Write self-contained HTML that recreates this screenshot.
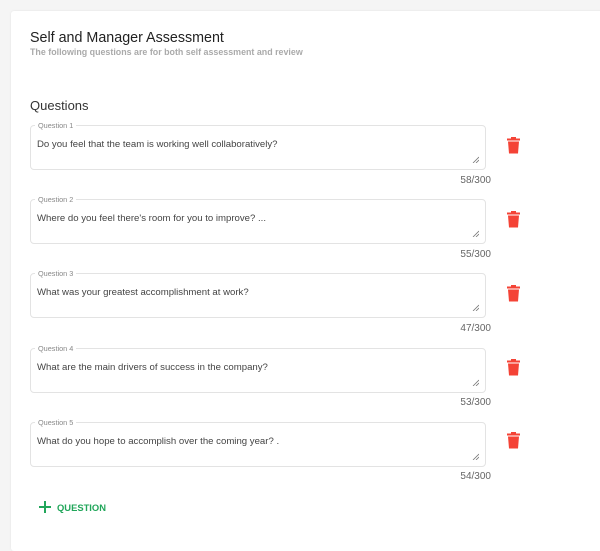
<!DOCTYPE html><html><head><style>
body{margin:0;width:600px;height:524px;background:#f5f5f5;font-family:"Liberation Sans",sans-serif;overflow:hidden;position:relative}
.card{position:absolute;left:11px;top:11px;width:600px;height:540px;background:#fff;border-radius:3px;box-shadow:0 0 2px rgba(0,0,0,.08)}
.t{position:absolute;left:30px;top:30px;font-size:14.3px;color:#222}
.s{position:absolute;left:30px;top:47px;font-size:8.9px;color:#aaa;font-weight:bold}
.q{position:absolute;left:30px;top:98px;font-size:13px;color:#333}
.box{position:absolute;left:30px;width:454px;height:43px;border:1px solid #e3e3e3;border-radius:4px}
.lab{position:absolute;left:4px;top:-5px;background:#fff;padding:0 3px;font-size:7.3px;color:#888}
.txt{position:absolute;left:6px;top:13px;font-size:9.6px;color:#444}
.rz{position:absolute;right:6px;bottom:6px}
.cnt{position:absolute;right:109px;font-size:10px;color:#666}
.tr{position:absolute;left:507px}
.add{position:absolute;left:57px;top:502px;color:#21a65a;font-size:9.4px;font-weight:bold}
</style></head><body>
<div class="card"></div>
<div class="t">Self and Manager Assessment</div>
<div class="s">The following questions are for both self assessment and review</div>
<div class="q">Questions</div>

<div class="box" style="top:125px"><span class="lab">Question 1</span><span class="txt">Do you feel that the team is working well collaboratively?</span><svg class="rz" width="7" height="7"><path d="M1 7L7 1M4 7L7 4" stroke="#777" stroke-width=".8"/></svg></div>
<div class="cnt" style="top:175px">58/300</div>
<svg class="tr" style="top:137px" width="13" height="17" viewBox="0 0 13 17"><path d="M4 0h5v1.5h4v2H0v-2h4z M1 4.5h11l-1 12H2z" fill="#f44336"/></svg>

<div class="box" style="top:199px"><span class="lab">Question 2</span><span class="txt">Where do you feel there's room for you to improve? ...</span><svg class="rz" width="7" height="7"><path d="M1 7L7 1M4 7L7 4" stroke="#777" stroke-width=".8"/></svg></div>
<div class="cnt" style="top:249px">55/300</div>
<svg class="tr" style="top:211px" width="13" height="17" viewBox="0 0 13 17"><path d="M4 0h5v1.5h4v2H0v-2h4z M1 4.5h11l-1 12H2z" fill="#f44336"/></svg>

<div class="box" style="top:273px"><span class="lab">Question 3</span><span class="txt">What was your greatest accomplishment at work?</span><svg class="rz" width="7" height="7"><path d="M1 7L7 1M4 7L7 4" stroke="#777" stroke-width=".8"/></svg></div>
<div class="cnt" style="top:323px">47/300</div>
<svg class="tr" style="top:285px" width="13" height="17" viewBox="0 0 13 17"><path d="M4 0h5v1.5h4v2H0v-2h4z M1 4.5h11l-1 12H2z" fill="#f44336"/></svg>

<div class="box" style="top:348px"><span class="lab">Question 4</span><span class="txt">What are the main drivers of success in the company?</span><svg class="rz" width="7" height="7"><path d="M1 7L7 1M4 7L7 4" stroke="#777" stroke-width=".8"/></svg></div>
<div class="cnt" style="top:397px">53/300</div>
<svg class="tr" style="top:359px" width="13" height="17" viewBox="0 0 13 17"><path d="M4 0h5v1.5h4v2H0v-2h4z M1 4.5h11l-1 12H2z" fill="#f44336"/></svg>

<div class="box" style="top:422px"><span class="lab">Question 5</span><span class="txt">What do you hope to accomplish over the coming year? .</span><svg class="rz" width="7" height="7"><path d="M1 7L7 1M4 7L7 4" stroke="#777" stroke-width=".8"/></svg></div>
<div class="cnt" style="top:471px">54/300</div>
<svg class="tr" style="top:432px" width="13" height="17" viewBox="0 0 13 17"><path d="M4 0h5v1.5h4v2H0v-2h4z M1 4.5h11l-1 12H2z" fill="#f44336"/></svg>

<svg style="position:absolute;left:39px;top:501px" width="12" height="12"><path d="M6 0v12M0 6h12" stroke="#21a65a" stroke-width="2"/></svg>
<div class="add">QUESTION</div>
</body></html>
